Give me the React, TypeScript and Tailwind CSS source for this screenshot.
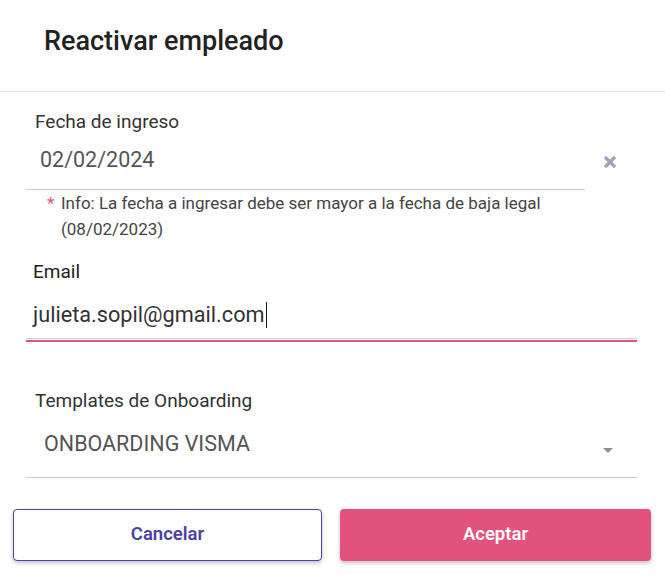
export default function App() {
  return (
    <div className="h-[575px] w-[665px] overflow-hidden bg-white font-['Roboto',sans-serif]">
      <div className="flex h-[92px] items-center border-b border-[#e6e6e6] pl-[44px] pb-[8px]">
        <h2 className="text-[27px] font-medium text-[#222]">Reactivar empleado</h2>
      </div>

      {/* Fecha de ingreso */}
      <div className="mt-[18px] flex items-start">
        <div className="ml-[26px] w-[559px]">
          <div className="pl-[9px] text-[19px] leading-[24px] text-[#333]">Fecha de ingreso</div>
          <div className="h-[56px] border-b border-[#cfcfcf] pl-[14px] pt-[14px]">
            <span className="text-[21.5px] leading-[24px] text-[#555]">02/02/2024</span>
          </div>
        </div>
        <button className="ml-[18px] mt-[45px] text-[#a39fc0]">
          <svg width="14" height="14" viewBox="0 0 14 14">
            <path d="M2 2 L12 12 M12 2 L2 12" stroke="currentColor" strokeWidth="3.2" strokeLinecap="butt" />
          </svg>
        </button>
      </div>
      <div className="ml-[47px] flex w-[538px] text-[17px] leading-[26px] text-[#444]">
        <span className="w-[14px] text-[#e3527c]">*</span>
        <p className="w-[524px]">Info: La fecha a ingresar debe ser mayor a la fecha de baja legal (08/02/2023)</p>
      </div>

      {/* Email */}
      <div className="mx-[28px] mt-[18px]">
        <div className="pl-[5px] text-[19px] leading-[24px] text-[#222]">Email</div>
      </div>
      <div className="ml-[26px] w-[611px]">
        <div className="h-[55px] border-b border-[#cfcfcf] pl-[7px] pt-[12px]">
          <span className="text-[21.7px] leading-[24px] text-[#333]">julieta.sopil@gmail.com</span>
          <span className="ml-[1px] inline-block h-[26px] w-[1px] translate-y-[6px] bg-[#111]" />
        </div>
        <div className="mt-[1px] h-[2px] bg-[#e3527c]" />
      </div>

      {/* Templates */}
      <div className="ml-[26px] mt-[47px] w-[611px]">
        <div className="pl-[9px] text-[19px] leading-[24px] text-[#333]">Templates de Onboarding</div>
        <div className="flex h-[65px] items-start justify-between border-b border-[#cfcfcf] pl-[18px] pt-[19px]">
          <span className="text-[21.5px] leading-[24px] text-[#555]">ONBOARDING VISMA</span>
          <svg className="mr-[24px] mt-[16px]" width="10" height="5" viewBox="0 0 10 5">
            <path d="M0 0 L10 0 L5 5 Z" fill="#909090" />
          </svg>
        </div>
      </div>

      {/* Buttons */}
      <div className="mt-[31px] flex gap-[18px] pl-[13px] pr-[14px]">
        <button className="h-[52px] w-[309px] rounded-[4px] border border-[#4b43a6] bg-white text-[18.5px] font-semibold text-[#4b3fa8] shadow-[0_2px_4px_rgba(0,0,0,0.25)]">
          Cancelar
        </button>
        <button className="h-[52px] w-[311px] rounded-[4px] bg-[#e3527c] text-[18.5px] font-semibold text-white shadow-[0_2px_4px_rgba(0,0,0,0.25)]">
          Aceptar
        </button>
      </div>
    </div>
  );
}
